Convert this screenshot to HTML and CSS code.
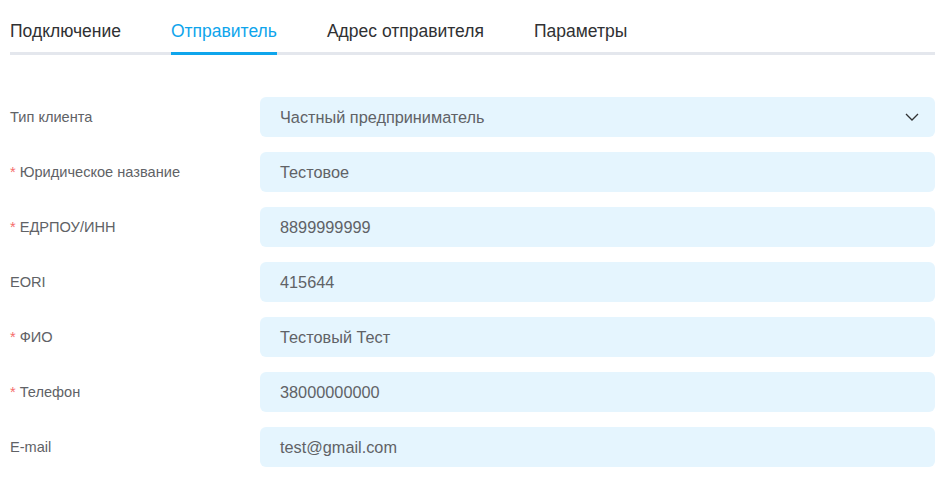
FILE: index.html
```html
<!DOCTYPE html>
<html lang="ru">
<head>
    <meta charset="UTF-8">
    <title>Отправитель</title>
    <link rel="stylesheet" href="styles.css">
</head>
<body>
    <div class="page">
        <nav class="tabs">
            <span class="tab">Подключение</span>
            <span class="tab active">Отправитель</span>
            <span class="tab">Адрес отправителя</span>
            <span class="tab">Параметры</span>
        </nav>

        <form class="form">
            <div class="row">
                <label class="label">Тип клиента</label>
                <div class="field select">
                    <span>Частный предприниматель</span>
                    <svg class="chevron" width="14" height="8" viewBox="0 0 14 8">
                        <path d="M1 1 L7 7 L13 1" fill="none" stroke="#303133" stroke-width="1.3"/>
                    </svg>
                </div>
            </div>
            <div class="row">
                <label class="label"><i class="req">*</i> Юридическое название</label>
                <div class="field">Тестовое</div>
            </div>
            <div class="row">
                <label class="label"><i class="req">*</i> ЕДРПОУ/ИНН</label>
                <div class="field">8899999999</div>
            </div>
            <div class="row">
                <label class="label">EORI</label>
                <div class="field">415644</div>
            </div>
            <div class="row">
                <label class="label"><i class="req">*</i> ФИО</label>
                <div class="field">Тестовый Тест</div>
            </div>
            <div class="row">
                <label class="label"><i class="req">*</i> Телефон</label>
                <div class="field">38000000000</div>
            </div>
            <div class="row">
                <label class="label">E-mail</label>
                <div class="field">test@gmail.com</div>
            </div>
        </form>
    </div>
</body>
</html>
```

FILE: styles.css
```css
/* Reset */
body, form, label {
    margin: 0;
    padding: 0;
    box-sizing: border-box;
}

body {
    font-family: 'Liberation Sans', Arial, sans-serif;
    background: #fff;
    color: #303133;
}

.page {
    width: 925px;
    padding-left: 10px;
}

/* Tabs */
.tabs {
    display: flex;
    gap: 50px;
    border-bottom: 3px solid #e4e7ed;
}

.tab {
    font-size: 17.5px;
    line-height: 20px;
    padding: 21px 0 11px;
    color: #303133;
    margin-bottom: -3px;
    border-bottom: 3px solid transparent;
}

.tab.active {
    color: #0ea5ec;
    border-bottom-color: #0ea5ec;
}

/* Form */
.form {
    margin-top: 42px;
    display: flex;
    flex-direction: column;
    gap: 15px;
}

.row {
    display: grid;
    grid-template-columns: 250px 1fr;
    align-items: center;
    height: 40px;
}

.label {
    font-size: 14.6px;
    color: #606266;
}

.req {
    font-style: normal;
    color: #f56c6c;
}

.field {
    height: 40px;
    box-sizing: border-box;
    background: #e5f5fe;
    border-radius: 6px;
    padding: 0 20px;
    display: flex;
    align-items: center;
    font-size: 16.3px;
    color: #606266;
}

.select {
    justify-content: space-between;
}

.chevron {
    margin-right: -4px;
}
```
